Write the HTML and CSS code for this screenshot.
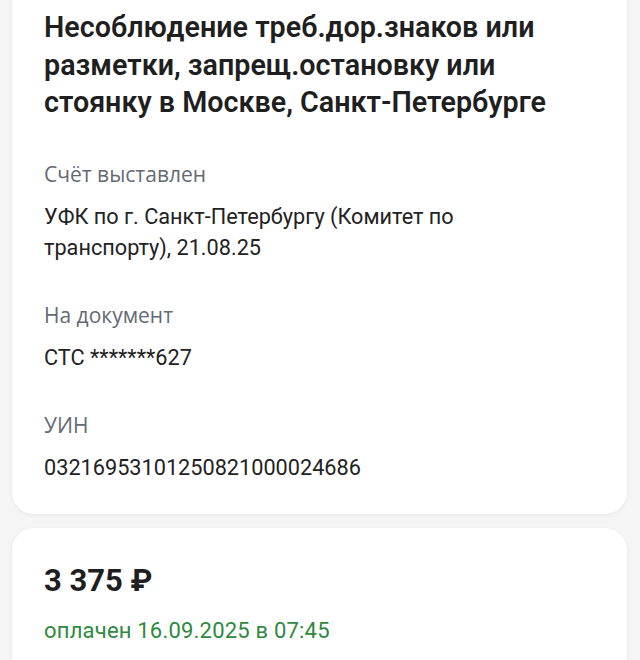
FILE: index.html
```html
<!DOCTYPE html>
<html lang="ru">
<head>
<meta charset="utf-8">
<title>Штраф</title>
<link rel="stylesheet" href="styles.css">
</head>
<body>
<main class="page">
  <section class="card card-info">
    <h1 class="title">Несоблюдение треб.дор.знаков или разметки, запрещ.остановку или стоянку в Москве, Санкт-Петербурге</h1>
    <div class="field">
      <div class="label">Счёт выставлен</div>
      <div class="value">УФК по г. Санкт-Петербургу (Комитет по транспорту), 21.08.25</div>
    </div>
    <div class="field">
      <div class="label">На документ</div>
      <div class="value">СТС *******627</div>
    </div>
    <div class="field">
      <div class="label">УИН</div>
      <div class="value">03216953101250821000024686</div>
    </div>
  </section>
  <section class="card card-pay">
    <div class="amount">3 375 ₽</div>
    <div class="status">оплачен 16.09.2025 в 07:45</div>
  </section>
</main>
</body>
</html>
```
FILE: styles.css
```css
html, body {
  margin: 0;
  padding: 0;
  background: #f5f5f6;
}
body {
  font-family: Roboto, "Liberation Sans", sans-serif;
  color: #1f1f1f;
  overflow: hidden;
}
.page {
  display: flex;
  flex-direction: column;
  gap: 14px;
  padding: 0 13px 0 12px;
  margin-top: -24px;
}
.card {
  background: #ffffff;
  border-radius: 22px;
  box-shadow: 0 1px 4px rgba(0, 0, 0, 0.06);
  padding: 0 32px;
}
.card-info {
  padding-top: 33px;
  padding-bottom: 31px;
}
.title {
  margin: 0;
  font-size: 28.7px;
  line-height: 37.5px;
  font-weight: 600;
  color: #1f1f1f;
}
.field {
  margin-top: 37px;
}
.label {
  font-family: "Open Sans", "Noto Sans", sans-serif;
  font-size: 21px;
  line-height: 30px;
  color: #646a73;
}
.value {
  margin-top: 12px;
  max-width: 520px;
  font-size: 21.7px;
  line-height: 31px;
  color: #222222;
}
.card-pay {
  padding-top: 34px;
  padding-bottom: 40px;
}
.amount {
  font-size: 31px;
  line-height: 38px;
  font-weight: 700;
  color: #1f1f1f;
}
.status {
  margin-top: 16px;
  font-size: 22px;
  line-height: 30px;
  letter-spacing: 0.2px;
  color: #2d8a3e;
}
```
